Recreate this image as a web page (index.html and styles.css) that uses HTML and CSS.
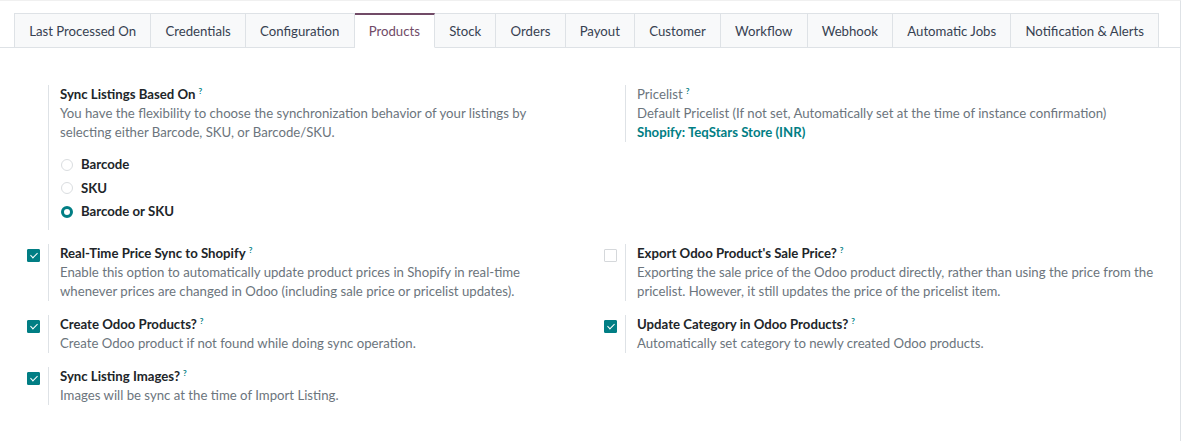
FILE: index.html
```html
<!DOCTYPE html>
<html lang="en">
<head>
  <meta charset="UTF-8" />
  <title>Shopify Instance - Products</title>
  <link rel="stylesheet" href="styles.css">
</head>
<body>
  <div class="sheet">
    <!-- Notebook tabs -->
    <ul class="tabs">
      <li class="tab">Last Processed On</li>
      <li class="tab">Credentials</li>
      <li class="tab">Configuration</li>
      <li class="tab active">Products</li>
      <li class="tab">Stock</li>
      <li class="tab">Orders</li>
      <li class="tab">Payout</li>
      <li class="tab">Customer</li>
      <li class="tab">Workflow</li>
      <li class="tab">Webhook</li>
      <li class="tab">Automatic Jobs</li>
      <li class="tab">Notification &amp; Alerts</li>
    </ul>

    <!-- Products settings -->
    <div class="settings">
      <div class="setting-box">
        <div class="left-pane"></div>
        <div class="right-pane">
          <div class="label">Sync Listings Based On<sup>?</sup></div>
          <div class="desc">You have the flexibility to choose the synchronization behavior of your listings by selecting either Barcode, SKU, or Barcode/SKU.</div>
          <div class="radios">
            <label class="radio"><span class="dot"></span>Barcode</label>
            <label class="radio"><span class="dot"></span>SKU</label>
            <label class="radio"><span class="dot on"></span>Barcode or SKU</label>
          </div>
        </div>
      </div>

      <div class="setting-box">
        <div class="left-pane"></div>
        <div class="right-pane">
          <div class="label plain">Pricelist<sup>?</sup></div>
          <div class="desc">Default Pricelist (If not set, Automatically set at the time of instance confirmation)</div>
          <a class="link">Shopify: TeqStars Store (INR)</a>
        </div>
      </div>

      <div class="setting-box">
        <div class="left-pane"><span class="check on"></span></div>
        <div class="right-pane">
          <div class="label">Real-Time Price Sync to Shopify<sup>?</sup></div>
          <div class="desc">Enable this option to automatically update product prices in Shopify in real-time whenever prices are changed in Odoo (including sale price or pricelist updates).</div>
        </div>
      </div>

      <div class="setting-box">
        <div class="left-pane"><span class="check"></span></div>
        <div class="right-pane">
          <div class="label">Export Odoo Product's Sale Price?<sup>?</sup></div>
          <div class="desc">Exporting the sale price of the Odoo product directly, rather than using the price from the pricelist. However, it still updates the price of the pricelist item.</div>
        </div>
      </div>

      <div class="setting-box">
        <div class="left-pane"><span class="check on"></span></div>
        <div class="right-pane">
          <div class="label">Create Odoo Products?<sup>?</sup></div>
          <div class="desc">Create Odoo product if not found while doing sync operation.</div>
        </div>
      </div>

      <div class="setting-box">
        <div class="left-pane"><span class="check on"></span></div>
        <div class="right-pane">
          <div class="label">Update Category in Odoo Products?<sup>?</sup></div>
          <div class="desc">Automatically set category to newly created Odoo products.</div>
        </div>
      </div>

      <div class="setting-box">
        <div class="left-pane"><span class="check on"></span></div>
        <div class="right-pane">
          <div class="label">Sync Listing Images?<sup>?</sup></div>
          <div class="desc">Images will be sync at the time of Import Listing.</div>
        </div>
      </div>
    </div>
  </div>
</body>
</html>
```

FILE: styles.css
```css
body {
  font-family: Lato, 'Liberation Sans', sans-serif;
  font-size: 13.2px;
  color: #212529;
  background: #ffffff;
  margin: 0;
  padding: 0;
}

.sheet {
  width: 1181px;
  height: 441px;
  border-top: 1px solid #f0f0f0;
  border-right: 1px solid #dee2e6;
  box-sizing: border-box;
}

.tabs {
  list-style: none;
  margin: 12px 0 0 0;
  padding: 0 0 0 14px;
  display: flex;
  border-bottom: 1px solid #dee2e6;
}

.tab {
  height: 35px;
  line-height: 34px;
  padding: 0 14.15px;
  margin-bottom: -1px;
  background: #f8f9fa;
  border: 1px solid #dee2e6;
  border-left: none;
  color: #374151;
  box-sizing: border-box;
  white-space: nowrap;
  flex-shrink: 0;
}

.tab:first-child {
  border-left: 1px solid #dee2e6;
}

.tab.active {
  background: #ffffff;
  color: #714b67;
  border-top: 2px solid #714b67;
  border-bottom-color: #ffffff;
  line-height: 32px;
}

.settings {
  display: grid;
  grid-template-columns: 577px 577px;
  align-items: start;
  row-gap: 14px;
  padding: 37px 0 0 14px;
  line-height: 19px;
}

.setting-box {
  display: flex;
}

.left-pane {
  width: 34px;
  flex-shrink: 0;
  padding: 5px 0 0 13px;
  box-sizing: border-box;
}

.right-pane {
  border-left: 1px solid #dee2e6;
  padding-left: 11px;
  padding-right: 17px;
  flex: 1;
}

.setting-box:nth-child(even) .right-pane {
  padding-right: 10px;
}

.label {
  font-weight: bold;
  color: #212529;
}

.label.plain {
  font-weight: normal;
  color: #6c757d;
}

sup {
  color: #017e84;
  font-size: 8px;
  font-weight: bold;
  margin-left: 3px;
  vertical-align: 5px;
  line-height: 0;
}

.desc {
  color: #6c757d;
}

.link {
  color: #017e84;
  font-weight: bold;
  display: block;
}

.radios {
  margin: 11px 0 6px 0;
}

.radio {
  display: flex;
  align-items: center;
  height: 23.5px;
  font-weight: bold;
  color: #212529;
}

.dot {
  width: 12px;
  height: 12px;
  border: 1px solid #dadde0;
  border-radius: 50%;
  box-sizing: border-box;
  margin: 0 8px 0 1px;
}

.dot.on {
  border: 3.5px solid #017e84;
}

.check {
  display: block;
  width: 13px;
  height: 13px;
  border: 1px solid #d5d8db;
  border-radius: 1px;
  box-sizing: border-box;
  background: #ffffff;
  position: relative;
}

.check.on {
  background: #017e84;
  border-color: #017e84;
}

.check.on::after {
  content: "";
  position: absolute;
  left: 3.5px;
  top: 1.5px;
  width: 3px;
  height: 6px;
  border: solid #ffffff;
  border-width: 0 1.5px 1.5px 0;
  transform: rotate(45deg);
}
```
